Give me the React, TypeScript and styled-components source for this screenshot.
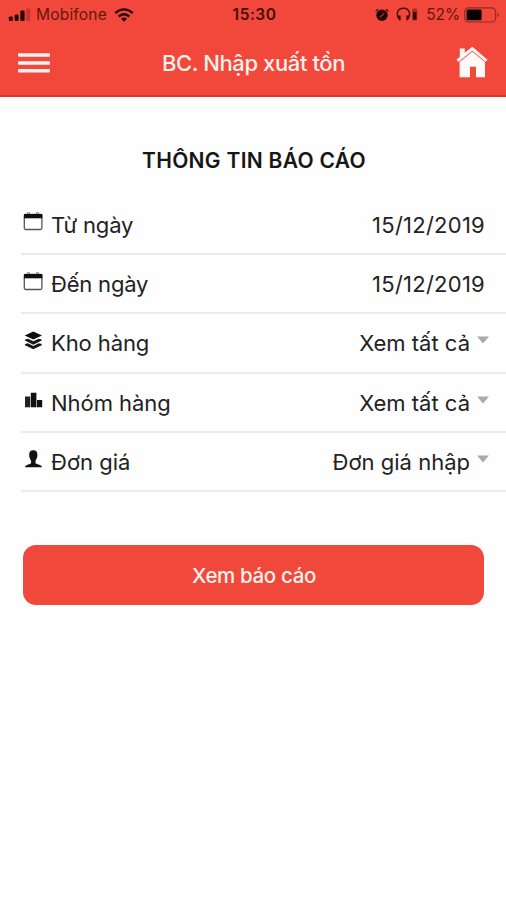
import React from 'react';
import styled, { createGlobalStyle } from 'styled-components';

const GlobalStyle = createGlobalStyle`
  * { box-sizing: border-box; }
  body {
    margin: 0;
    background: #fefefe;
    color: #161616;
    font-family: Inter, "Liberation Sans", sans-serif;
  }
`;

const Screen = styled.div`
  width: 506px;
  height: 900px;
  overflow: hidden;
  background: #fefefe;
`;

const Header = styled.header`
  height: 97px;
  background: #f1483b;
  border-bottom: 2px solid #dc3524;
`;

const StatusBar = styled.div`
  height: 29px;
  display: grid;
  grid-template-columns: 1fr auto 1fr;
  align-items: center;
  padding: 0 6px 0 8px;
  line-height: 29px;
`;

const StatusGroup = styled.div<{ $end?: boolean }>`
  display: flex;
  align-items: center;
  justify-content: ${(p) => (p.$end ? 'flex-end' : 'flex-start')};
  height: 29px;
`;

const Carrier = styled.span`
  margin: 0 7px 0 5px;
  font-size: 15.5px;
  letter-spacing: 0.2px;
  color: #65170f;
`;

const Clock = styled.span`
  padding-left: 1px;
  font-size: 15.5px;
  font-weight: 600;
  letter-spacing: 0.5px;
  color: #430e09;
`;

const Percent = styled.span`
  margin: 0 4px 0 7px;
  font-size: 15.5px;
  letter-spacing: -0.1px;
  color: #65170f;
`;

const NavBar = styled.nav`
  height: 66px;
  display: grid;
  grid-template-columns: 60px 1fr 60px;
  align-items: center;
  padding: 0 18px;
`;

const IconButton = styled.button<{ $end?: boolean }>`
  display: flex;
  justify-content: ${(p) => (p.$end ? 'flex-end' : 'flex-start')};
  padding: ${(p) => (p.$end ? '0' : '2px 0 0')};
  border: 0;
  background: none;
`;

const NavTitle = styled.h1`
  margin: 2px 0 0 1px;
  text-align: center;
  font-size: 22px;
  font-weight: 500;
  letter-spacing: -0.4px;
  line-height: 28px;
  color: #fff0ec;
  white-space: nowrap;
`;

const SectionTitle = styled.h2`
  margin: 50px 0 20.5px;
  padding-left: 2px;
  text-align: center;
  font-size: 21px;
  font-weight: 600;
  letter-spacing: 0.3px;
  line-height: 28px;
`;

const Form = styled.div`
  margin-left: 21px;
`;

const Row = styled.div`
  height: 59.4px;
  display: flex;
  align-items: center;
  padding: 1px 21px 0 2px;
  border-bottom: 2px solid #ebebeb;
  font-size: 22px;
  line-height: 30px;
  color: #222;
`;

const RowIcon = styled.span`
  display: flex;
  width: 20px;
  height: 24px;
  margin: 0 8px 3px 0;
`;

const Label = styled.span<{ $spacing: number }>`
  flex: 1;
  letter-spacing: ${(p) => p.$spacing}px;
`;

const Value = styled.span<{ $spacing: number; $menu?: boolean }>`
  letter-spacing: ${(p) => p.$spacing}px;
  margin-right: ${(p) => (p.$menu ? '7px' : '0')};
`;

const Caret = styled.svg`
  margin: 0 -4px 6px 0;
`;

const Submit = styled.button`
  display: block;
  width: 461px;
  height: 60.5px;
  margin: 52.5px 0 0 23px;
  padding: 1px 0 0 1px;
  border: 0;
  border-radius: 13px;
  background: #f0483b;
  color: #fff0ec;
  font: 500 20.5px/28px Inter, "Liberation Sans", sans-serif;
  letter-spacing: -0.35px;
`;

const SignalIcon = () => (
  <svg width="23" height="14" viewBox="0 0 23 14">
    <g fill="#210503">
      <rect x="0.8" y="8.5" width="4" height="4.5" rx="1.2" />
      <rect x="6.6" y="6.5" width="4" height="6.5" rx="1.2" />
      <rect x="12.4" y="2.5" width="4.2" height="10.5" rx="1.2" />
    </g>
    <rect x="18.2" y="0.5" width="4" height="12.5" rx="1.2" fill="#c5362b" />
  </svg>
);

const WifiIcon = () => (
  <svg width="20" height="14" viewBox="0 0 20 14">
    <g fill="none" stroke="#210503" strokeWidth="2.3">
      <path d="M1.2 5 Q10 -2.2 18.8 5" />
      <path d="M4.6 8.5 Q10 4 15.4 8.5" />
    </g>
    <path d="M10 13.8 7 10.8Q10 8.4 13 10.8Z" fill="#210503" />
  </svg>
);

const AlarmSvg = styled.svg`
  margin-right: 7px;
`;

const AlarmIcon = () => (
  <AlarmSvg width="14" height="14" viewBox="0 0 14 14">
    <path d="M1.2 3.6Q0.9 1.3 3.5 1.7M10.5 1.7Q13.1 1.3 12.8 3.6" stroke="#48100b" strokeWidth="1.3" fill="none" />
    <circle cx="7" cy="7.2" r="5.7" fill="#210503" />
    <path d="m4.8 9 2.3-1.5 2-2.5" stroke="#b92f25" strokeWidth="1.2" fill="none" />
  </AlarmSvg>
);

const HeadphonesIcon = () => (
  <svg width="23" height="15" viewBox="0 0 23 15">
    <path d="M3.5 12.4C-0.7 7.5 1.5 1.3 7.5 1.3S15.3 7.5 11.5 12.4" fill="none" stroke="#48100b" strokeWidth="1.5" />
    <path d="M2 8.6h2.6v4.6H3.3zM13 8.6h-2.6v4.6h1.3z" fill="#310a06" />
    <rect x="16.2" y="1.5" width="5" height="12" rx="1.6" fill="#a62a20" />
    <path d="M17 5h3.4v7.6H17z" fill="#310a06" />
  </svg>
);

const BatteryIcon = () => (
  <svg width="36" height="16" viewBox="0 0 36 16">
    <rect x="0.8" y="0.8" width="30.8" height="14.2" rx="4" fill="none" stroke="#962a21" strokeWidth="1.2" />
    <rect x="2.6" y="2.6" width="15" height="10.6" rx="1.5" fill="#080101" />
    <path d="M33.4 5.5q3.2 2.4 0 4.8z" fill="#962a21" />
  </svg>
);

const MenuIcon = () => (
  <svg width="32" height="20" viewBox="0 0 32 20" fill="#fff1ee">
    <rect y="0.2" width="32" height="3.5" rx="0.8" />
    <rect y="8.2" width="32" height="3.5" rx="0.8" />
    <rect y="16" width="32" height="3.5" rx="0.8" />
  </svg>
);

const HomeIcon = () => (
  <svg width="32" height="32" viewBox="0 0 32 32" fill="#fff8f6">
    <path d="M16.3 0.7 31.5 13.7 29.8 15.8 16.3 4.8 2.3 15.9 0.5 13.7 3.8 10.9V2.4H8.8V6.7Z" />
    <path d="M16.3 5.7 29 16V31.3H20V20.8H14V31.3H3.6V16Z" />
  </svg>
);

const CalendarIcon = () => (
  <svg width="20" height="24" viewBox="0 0 20 24">
    <rect x="1.3" y="3.3" width="17.6" height="15.2" rx="1.5" fill="none" stroke="#555" strokeWidth="1.3" />
    <path d="M1 3h18.3v4.3H1z" fill="#101010" />
    <path d="M4.5 3V1.7h2V3M13.5 3V1.7h2V3" fill="none" stroke="#777" strokeWidth="0.9" />
  </svg>
);

const LayersIcon = () => (
  <svg width="20" height="24" viewBox="0 0 20 24">
    <path d="M10.3 1.5 19 5.5 10.3 9.5 1.7 5.5Z" fill="#101010" />
    <path d="m2 9.4 3-.7 5.3 2.6 5.4-2.6 3 .7v1.2l-8.4 4.1L2 10.600zM2 14l3-.8 5.3 2.7 5.4-2.7 3 .8v1.200l-8.400 4.100L2 15.200z" fill="#181818" />
  </svg>
);

const BarsIcon = () => (
  <svg width="20" height="24" viewBox="0 0 20 24" fill="#111">
    <path d="M2 7.5h5.2v10.8H2z" fill="#222" />
    <path d="M7.8 3.7h5.6v14.6H7.8zM14 11h5.2v7.3H14z" />
  </svg>
);

const PersonIcon = () => (
  <svg width="20" height="24" viewBox="0 0 20 24" fill="#111">
    <path d="M10.2 1.3c3.1 0 4.4 1.8 4.2 5.1-.1 2.5-1.3 3.9-1.9 5.5v2c0 1.5 6.2 1 6.5 4.4H2c.3-3.4 6.1-2.900 6.100-4.400v-2C7.400 10.300 6.300 8.900 6.200 6.400 6 3.100 7.300 1.300 10.200 1.300Z" />
  </svg>
);

type Field = {
  icon: React.ComponentType;
  label: string;
  value: string;
  labelSpacing: number;
  valueSpacing: number;
  menu?: boolean;
};

const fields: Field[] = [
  { icon: CalendarIcon, label: 'Từ ngày', value: '15/12/2019', labelSpacing: -0.15, valueSpacing: 0.25 },
  { icon: CalendarIcon, label: 'Đến ngày', value: '15/12/2019', labelSpacing: -0.2, valueSpacing: 0.25 },
  { icon: LayersIcon, label: 'Kho hàng', value: 'Xem tất cả', labelSpacing: -0.1, valueSpacing: 0, menu: true },
  { icon: BarsIcon, label: 'Nhóm hàng', value: 'Xem tất cả', labelSpacing: -0.05, valueSpacing: 0, menu: true },
  { icon: PersonIcon, label: 'Đơn giá', value: 'Đơn giá nhập', labelSpacing: 0, valueSpacing: 0, menu: true },
];

export default function App() {
  return (
    <>
      <GlobalStyle />
      <Screen>
        <Header>
          <StatusBar>
            <StatusGroup>
              <SignalIcon />
              <Carrier>Mobifone</Carrier>
              <WifiIcon />
            </StatusGroup>
            <Clock>15:30</Clock>
            <StatusGroup $end>
              <AlarmIcon />
              <HeadphonesIcon />
              <Percent>52%</Percent>
              <BatteryIcon />
            </StatusGroup>
          </StatusBar>
          <NavBar>
            <IconButton aria-label="Menu"><MenuIcon /></IconButton>
            <NavTitle>BC. Nhập xuất tồn</NavTitle>
            <IconButton $end aria-label="Trang chủ"><HomeIcon /></IconButton>
          </NavBar>
        </Header>
        <SectionTitle>THÔNG TIN BÁO CÁO</SectionTitle>
        <Form>
          {fields.map(({ icon: Icon, ...f }) => (
            <Row key={f.label}>
              <RowIcon><Icon /></RowIcon>
              <Label $spacing={f.labelSpacing}>{f.label}</Label>
              <Value $spacing={f.valueSpacing} $menu={f.menu}>{f.value}</Value>
              {f.menu && (
                <Caret width="12" height="8" viewBox="0 0 12 8">
                  <path d="M0 0.5H12L6 7.5Z" fill="#aaa" />
                </Caret>
              )}
            </Row>
          ))}
        </Form>
        <Submit>Xem báo cáo</Submit>
      </Screen>
    </>
  );
}
